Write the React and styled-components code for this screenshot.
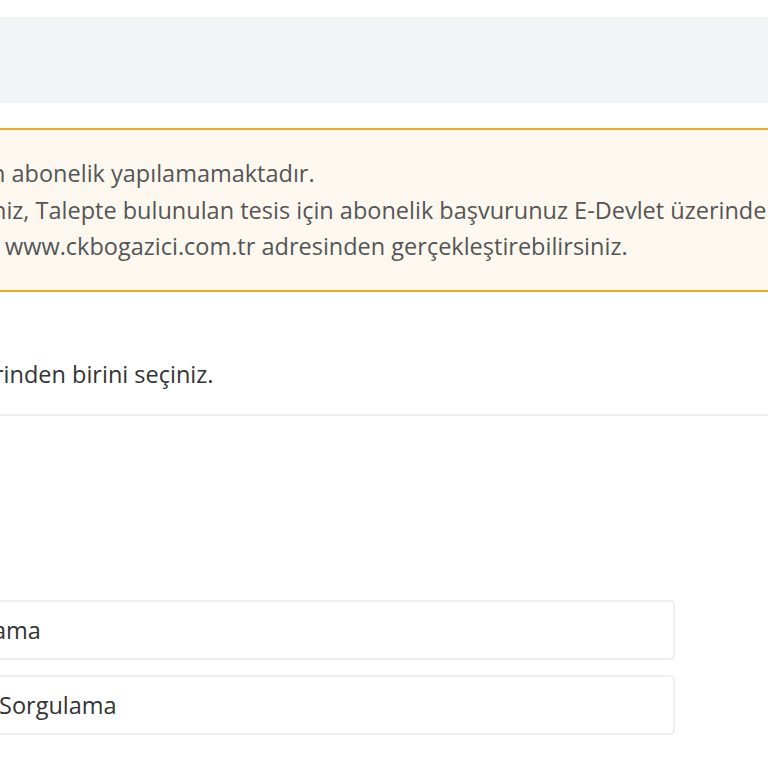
import React from "react";
import styled, { createGlobalStyle } from "styled-components";

const Global = createGlobalStyle`
  html, body {
    margin: 0;
    padding: 0;
    background: #fff;
    overflow: hidden;
  }
  body {
    font-family: "Open Sans", "Noto Sans", "Liberation Sans", sans-serif;
    color: #333;
  }
`;

const Page = styled.div`
  width: 768px;
  height: 768px;
  padding-top: 17px;
  box-sizing: border-box;
  overflow: hidden;
`;

// gri üst bant
const TopBand = styled.div`
  height: 86px;
  background: #f3f4f5;
`;

const Alert = styled.div`
  margin-top: 25px;
  border-top: 2px solid #f2a81d;
  border-bottom: 2px solid #f2a81d;
  background: #fdf8ef;
  padding: 25px 0;
  color: #555;
  font-size: 23.5px;
  line-height: 36.5px;
`;

const Line = styled.div`
  white-space: nowrap;
  text-indent: ${({ cut }) => cut || 0}px;
`;

const Hint = styled.div`
  margin-top: 64px;
  font-size: 23.5px;
  line-height: 36px;
  color: #333;
  white-space: nowrap;
  text-indent: ${({ cut }) => cut || 0}px;
`;

const Divider = styled.hr`
  margin: 22px 0 0 0;
  border: none;
  border-top: 2px solid #ededed;
`;

const Options = styled.ul`
  list-style: none;
  margin: 184px 0 0 0;
  padding: 0;
  width: 675px;
  display: flex;
  flex-direction: column;
  gap: 15px;
`;

const Option = styled.li`
  height: 60px;
  box-sizing: border-box;
  border: 2px solid #eeeeee;
  border-left: none;
  border-radius: 0 5px 5px 0;
  display: flex;
  align-items: center;
  font-size: 23.5px;
  color: #333;
  white-space: nowrap;
  text-indent: ${({ cut }) => cut || 0}px;
`;

export default function App() {
  return (
    <Page>
      <Global />
      <TopBand />
      <Alert>
        <Line cut={-9}>n abonelik yapılamamaktadır.</Line>
        <Line cut={-8}>niz, Talepte bulunulan tesis için abonelik başvurunuz E-Devlet üzerinden</Line>
        <Line cut={5}>www.ckbogazici.com.tr adresinden gerçekleştirebilirsiniz.</Line>
      </Alert>
      <Hint cut={-6}>rinden birini seçiniz.</Hint>
      <Divider />
      <Options>
        <Option cut={-7}>ama</Option>
        <Option cut={-1}>Sorgulama</Option>
      </Options>
    </Page>
  );
}
